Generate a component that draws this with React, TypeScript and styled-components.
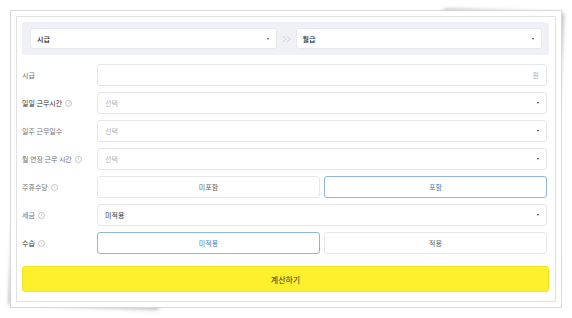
import styled, { createGlobalStyle } from 'styled-components';

const GlobalStyle = createGlobalStyle`
    html {
        background: #ffffff;
    }
    html, body {
        margin: 0;
    }
    body {
        font-family: 'Noto Sans CJK KR', 'Noto Sans', sans-serif;
        color: #333333;
    }
`;

const Page = styled.div`
    padding: 10px 11px 11px 10px;
    width: 572px;
    height: 318px;
    box-sizing: border-box;
`;

const Frame = styled.div`
    position: relative;
    width: 552px;
    height: 298px;
    box-sizing: border-box;
    border: 1px solid #d9d9d9;
    background: #ffffff;
    padding: 5px;

    &::before {
        content: '';
        position: absolute;
        z-index: -1;
        left: 3px;
        bottom: 3px;
        width: 150px;
        height: 80px;
        box-shadow: -3px 3px 4px rgba(0, 0, 0, 0.3);
        transform: skew(-3deg, 2deg);
    }

    &::after {
        content: '';
        position: absolute;
        z-index: -1;
        right: 3px;
        top: 3px;
        width: 120px;
        height: 95px;
        box-shadow: 3px -3px 4px rgba(0, 0, 0, 0.3);
        transform: skew(-3deg, 2deg);
    }
`;

const Inner = styled.div`
    height: 100%;
    box-sizing: border-box;
    border: 1px solid #e2e2e2;
    padding: 5px 6px 9px 5px;
    display: flex;
    flex-direction: column;
`;

const ConvertBar = styled.div`
    height: 33px;
    box-sizing: border-box;
    background: #eff1f6;
    border-radius: 2px;
    padding: 6px 7px 6px 8px;
    display: grid;
    grid-template-columns: 1fr 19px 1fr;
    align-items: center;
`;

const Arrows = styled.svg`
    justify-self: center;
    display: block;
`;

const Box = styled.div<{ $muted?: boolean }>`
    height: 22px;
    box-sizing: border-box;
    background: #ffffff;
    border: 1px solid #e4e6ea;
    border-radius: 3px;
    display: flex;
    align-items: center;
    padding: 0 7px 0 7px;
    font-size: 7px;
    color: ${(p) => (p.$muted ? '#b3b3b3' : '#333333')};
`;

const TopSelect = styled(Box)`
    height: 21px;
    padding-left: 6px;
    border-color: #e6e8ec;
    color: #222222;
    font-weight: 500;
`;

const Grow = styled.span`
    flex: 1;
`;

const Caret = styled.span`
    width: 0;
    height: 0;
    border-left: 1.5px solid transparent;
    border-right: 1.5px solid transparent;
    border-top: 2px solid #444444;
`;

const Unit = styled.span`
    color: #b0b0b0;
    font-size: 7px;
`;

const Form = styled.div`
    margin-top: 9px;
    margin-right: 2px;
    display: flex;
    flex-direction: column;
    gap: 6px;
`;

const Row = styled.div`
    display: grid;
    grid-template-columns: 75px 1fr;
    align-items: center;
    height: 22px;
`;

const Label = styled.div<{ $strong?: boolean }>`
    font-size: 7px;
    color: ${(p) => (p.$strong ? '#333333' : '#707070')};
    display: flex;
    align-items: center;
    gap: 3px;
    white-space: nowrap;
`;

const Help = styled.span`
    width: 5px;
    height: 5px;
    border: 0.8px solid #c4c4c4;
    border-radius: 50%;
    color: #c0c0c0;
    font-size: 4px;
    line-height: 5px;
    text-align: center;
    font-family: 'DejaVu Sans', sans-serif;
`;

const ToggleGroup = styled.div`
    display: grid;
    grid-template-columns: 1fr 1fr;
    gap: 4px;
    height: 22px;
`;

const Toggle = styled.div<{ $on?: boolean }>`
    box-sizing: border-box;
    border: 1px solid ${(p) => (p.$on ? '#8fb6d4' : '#e6e8ec')};
    border-radius: 3px;
    background: #ffffff;
    display: flex;
    align-items: center;
    justify-content: center;
    font-size: 7px;
    color: ${(p) => (p.$on ? '#4a82b0' : '#666666')};
`;

const CalcButton = styled.div`
    margin-top: 12px;
    height: 26px;
    border-radius: 3px;
    background: #fff02e;
    border: 1px solid #f3e21e;
    box-sizing: border-box;
    display: flex;
    align-items: center;
    justify-content: center;
    font-size: 8px;
    color: #333333;
`;

type Field =
    | { kind: 'input'; label: string; strong?: boolean; help?: boolean; unit: string }
    | { kind: 'select'; label: string; strong?: boolean; help?: boolean; value: string; muted?: boolean }
    | { kind: 'toggle'; label: string; strong?: boolean; help?: boolean; options: string[]; active: number };

const fields: Field[] = [
    { kind: 'input', label: '시급', unit: '원' },
    { kind: 'select', label: '일일 근무시간', strong: true, help: true, value: '선택', muted: true },
    { kind: 'select', label: '일주 근무일수', value: '선택', muted: true },
    { kind: 'select', label: '월 연장 근무 시간', help: true, value: '선택', muted: true },
    { kind: 'toggle', label: '주휴수당', help: true, options: ['미포함', '포함'], active: 1 },
    { kind: 'select', label: '세금', help: true, value: '미적용' },
    { kind: 'toggle', label: '수습', strong: true, help: true, options: ['미적용', '적용'], active: 0 },
];

const Control = ({ field }: { field: Field }) => {
    if (field.kind === 'input') {
        return (
            <Box>
                <Grow />
                <Unit>{field.unit}</Unit>
            </Box>
        );
    }
    if (field.kind === 'select') {
        return (
            <Box $muted={field.muted}>
                <Grow>{field.value}</Grow>
                <Caret />
            </Box>
        );
    }
    return (
        <ToggleGroup>
            {field.options.map((o, i) => (
                <Toggle key={o} $on={i === field.active}>
                    {o}
                </Toggle>
            ))}
        </ToggleGroup>
    );
};

export default function App() {
    return (
        <Page>
            <GlobalStyle />
            <Frame>
                <Inner>
                    <ConvertBar>
                        <TopSelect>
                            <Grow>시급</Grow>
                            <Caret />
                        </TopSelect>
                        <Arrows width="9" height="8" viewBox="0 0 9 8">
                            <path d="M1 1 L4 4 L1 7 M5 1 L8 4 L5 7" fill="none" stroke="#c6cad2" strokeWidth="0.8" />
                        </Arrows>
                        <TopSelect>
                            <Grow>월급</Grow>
                            <Caret />
                        </TopSelect>
                    </ConvertBar>
                    <Form>
                        {fields.map((f) => (
                            <Row key={f.label}>
                                <Label $strong={f.strong}>
                                    {f.label}
                                    {f.help && <Help>?</Help>}
                                </Label>
                                <Control field={f} />
                            </Row>
                        ))}
                    </Form>
                    <CalcButton>계산하기</CalcButton>
                </Inner>
            </Frame>
        </Page>
    );
}
